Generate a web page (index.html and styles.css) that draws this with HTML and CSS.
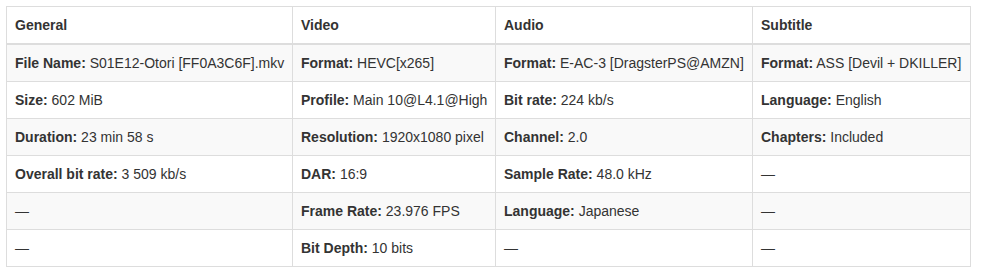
FILE: index.html
```html
<!DOCTYPE html>
<html>
<head>
<meta charset="utf-8">
<link rel="stylesheet" href="styles.css">
</head>
<body>
<table class="media-table">
  <colgroup>
    <col class="c1"><col class="c2"><col class="c3"><col class="c4">
  </colgroup>
  <thead>
    <tr><th>General</th><th>Video</th><th>Audio</th><th>Subtitle</th></tr>
  </thead>
  <tbody>
    <tr>
      <td><b>File Name:</b> S01E12-Otori [FF0A3C6F].mkv</td>
      <td><b>Format:</b> HEVC[x265]</td>
      <td><b>Format:</b> E-AC-3 [DragsterPS@AMZN]</td>
      <td><b>Format:</b> ASS [Devil + DKILLER]</td>
    </tr>
    <tr>
      <td><b>Size:</b> 602 MiB</td>
      <td><b>Profile:</b> Main 10@L4.1@High</td>
      <td><b>Bit rate:</b> 224 kb/s</td>
      <td><b>Language:</b> English</td>
    </tr>
    <tr>
      <td><b>Duration:</b> 23 min 58 s</td>
      <td><b>Resolution:</b> 1920x1080 pixel</td>
      <td><b>Channel:</b> 2.0</td>
      <td><b>Chapters:</b> Included</td>
    </tr>
    <tr>
      <td><b>Overall bit rate:</b> 3 509 kb/s</td>
      <td><b>DAR:</b> 16:9</td>
      <td><b>Sample Rate:</b> 48.0 kHz</td>
      <td>—</td>
    </tr>
    <tr>
      <td>—</td>
      <td><b>Frame Rate:</b> 23.976 FPS</td>
      <td><b>Language:</b> Japanese</td>
      <td>—</td>
    </tr>
    <tr>
      <td>—</td>
      <td><b>Bit Depth:</b> 10 bits</td>
      <td>—</td>
      <td>—</td>
    </tr>
  </tbody>
</table>
</body>
</html>
```
FILE: styles.css
```css
html, body {
  margin: 0;
  padding: 0;
  background: #fff;
}
body {
  padding: 6px 0 0 6px;
  font-family: "Liberation Sans", Arial, Helvetica, sans-serif;
  font-size: 14px;
  line-height: 20px;
  color: #333;
}
.media-table {
  border-collapse: collapse;
  border-spacing: 0;
  table-layout: fixed;
  width: 964px;
  border: 1px solid #ddd;
}
.c1 { width: 286px; }
.c2 { width: 203px; }
.c3 { width: 257px; }
.c4 { width: 218px; }
.media-table th,
.media-table td {
  border: 1px solid #ddd;
  padding: 8px;
  text-align: left;
  vertical-align: top;
  white-space: nowrap;
}
.media-table th {
  font-weight: bold;
  border-bottom: 2px solid #ddd;
}
.media-table tbody tr:nth-child(odd) {
  background: #f9f9f9;
}
.media-table b {
  font-weight: bold;
}
```
